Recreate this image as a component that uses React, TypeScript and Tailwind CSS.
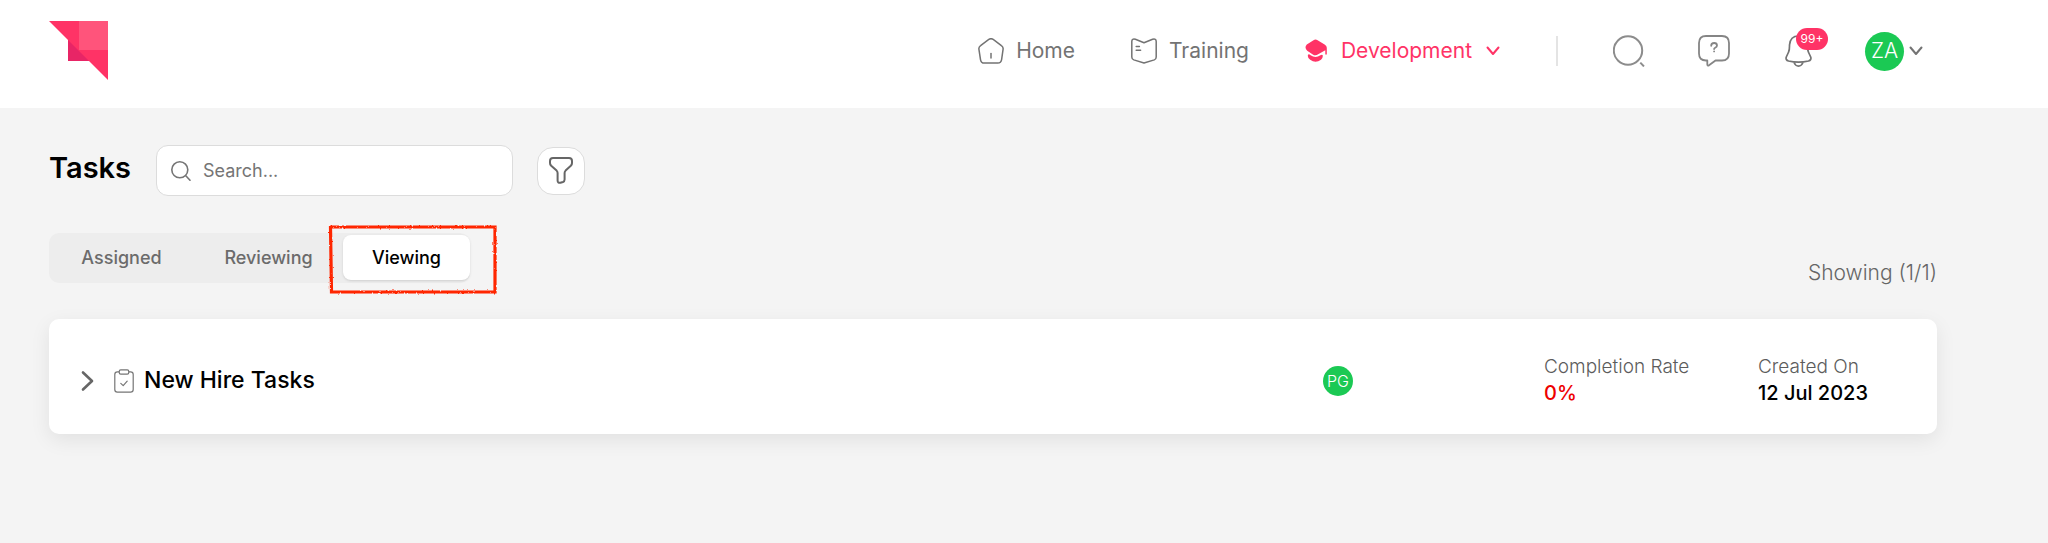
import { useState } from "react";
import clsx from "clsx";

type IconProps = { className?: string };

const tasks = [
  {
    id: 1,
    name: "New Hire Tasks",
    owner: "PG",
    completionRate: 0,
    createdOn: "12 Jul 2023",
  },
];

const tabs = ["Assigned", "Reviewing", "Viewing"];

function Logo() {
  return (
    <svg className="size-[60px]" viewBox="0 0 60 60" aria-hidden="true">
      <path d="M0 0H59V59L40 40H19V19Z" fill="#ff3366" />
      <path d="M19 19L40 40H19Z" fill="#e82566" />
      <path d="M30 0H59V29H30Z" fill="#ff547b" />
    </svg>
  );
}

function HomeIcon() {
  return (
    <svg className="size-[26px]" viewBox="0 0 26 26" fill="none" stroke="currentColor" strokeWidth="1.5" aria-hidden="true">
      <path d="M10.8 1.3Q13 .1 15.2 1.3L23.4 7.6Q25.4 9 25.1 11.2L23.6 21.6Q23 25.1 19.8 25.1H6.3Q3 25.1 2.5 21.6L.9 11.2Q.6 9 2.6 7.6Z" />
      <path d="M13 15.5V20" strokeLinecap="round" />
    </svg>
  );
}

function BookIcon() {
  return (
    <svg className="size-[26px]" viewBox="0 0 26 26" fill="none" stroke="currentColor" strokeWidth="1.5" strokeLinejoin="round" aria-hidden="true">
      <path d="M13 4.8L4.4 1.2Q.8 .2 .8 3.5V19Q.8 21.2 2.8 21.9L13 25L23.3 21.9Q25.2 21.2 25.2 19V3.5Q25.2 .2 21.6 1.2Z" />
      <path d="M5.2 8.6H8.4M5.2 12.2H9.6" strokeLinecap="round" />
    </svg>
  );
}

function CapIcon() {
  return (
    <svg className="h-[24px] w-[22px]" viewBox="0 0 22 24" fill="currentColor" aria-hidden="true">
      <path d="M8.5 1.2Q10.5 0 12.6 1.2L19.6 5.6Q22 7.4 21.8 9V15.5H20.3V11.2L13.2 15.3Q10.5 17.2 7.8 15.4L2.2 11.7Q-1 8.5 1.8 5.4Z" />
      <path d="M3 15.7Q3.8 14.7 5.6 16.2Q10.5 19.6 15.4 16.2Q17.4 14.9 17.8 16.6Q18 19 16 20.8Q10.5 24.5 5.2 20.8Q2.2 18.6 3 15.7Z" />
    </svg>
  );
}

function ChevronIcon({ className }: IconProps) {
  return (
    <svg className={className} viewBox="0 0 14 10" fill="none" stroke="currentColor" strokeWidth="2" strokeLinecap="round" strokeLinejoin="round" aria-hidden="true">
      <path d="M1.5 1.5L7 8L12.5 1.5" />
    </svg>
  );
}

function HeaderSearchIcon() {
  return (
    <svg className="size-8" viewBox="0 0 32 32" fill="none" stroke="#8c8c8c" strokeWidth="2" aria-hidden="true">
      <circle cx="15" cy="15.5" r="14.2" />
      <path d="M27.3 27.6L31 31.4" />
    </svg>
  );
}

function HelpIcon() {
  return (
    <svg className="size-8" viewBox="0 0 32 32" fill="none" stroke="#858585" strokeWidth="1.8" strokeLinecap="round" strokeLinejoin="round" aria-hidden="true">
      <path d="M8 1H24Q31 1 31 8V18.5Q31 25.500 24 25.500H17.5L11 30.3Q9.3 31 9.3 29.3V25.500H8Q1 25.500 1 18.5V8Q1 1 8 1Z" />
      <path d="M13.2 10.8Q13.2 8 16.2 8Q19 8 19 10.5Q19 12 17.2 12.8Q16.1 13.4 16.1 14" />
      <path d="M16.1 16.3V16.4" />
    </svg>
  );
}

function BellIcon() {
  return (
    <svg className="h-8 w-[29px]" viewBox="-2 0 29 32" fill="none" stroke="currentColor" strokeWidth="1.7" strokeLinejoin="round" aria-hidden="true">
      <path d="M13.5 1Q5.2 1 4.5 10Q4.6 15 3.6 17L1.3 22Q.3 25 3.5 26Q13.5 28.3 23.5 26Q26.7 25 25.7 22L23.4 17Q22.4 15 22.5 10Q21.8 1 13.5 1Z" />
      <path d="M9 27.5Q10.5 31.1 13.5 31.1Q16.5 31.1 18 27.5" />
    </svg>
  );
}

function SearchIcon({ className }: IconProps) {
  return (
    <svg className={className} viewBox="0 0 20 20" fill="none" stroke="currentColor" strokeWidth="1.6" strokeLinecap="round" aria-hidden="true">
      <circle cx="8.8" cy="8.8" r="8" />
      <path d="M14.8 14.8L19 19.2" />
    </svg>
  );
}

function FilterIcon() {
  return (
    <svg className="h-[27px] w-6" viewBox="0 0 24 27" fill="none" stroke="currentColor" strokeWidth="2" strokeLinejoin="round" aria-hidden="true">
      <path d="M4 1H20Q23 1 23 4V6Q23 7.6 21.8 8.8L16.6 13.6Q15.6 14.6 15.6 16V22.6Q15.6 24.4 14 25L11.4 25.8Q8.6 26.2 8.6 23.5V16Q8.6 14.6 7.6 13.6L2.2 8.8Q1 7.6 1 6V4Q1 1 4 1Z" />
    </svg>
  );
}

function ClipboardIcon() {
  return (
    <svg className="h-6 w-5" viewBox="0 0 20 24" fill="none" stroke="currentColor" strokeWidth="1.2" strokeLinecap="round" strokeLinejoin="round" aria-hidden="true">
      <path d="M5.2 2.8H3.4Q.8 2.8 .8 5.4V20.6Q.8 23.2 3.4 23.2H16.6Q19.2 23.2 19.2 20.6V5.4Q19.2 2.8 16.6 2.8H14.8" />
      <rect x="5.2" y=".8" width="9.6" height="4.4" rx="1.6" />
      <path d="M6.8 14.4L9.2 16.6L13.2 12.2" />
    </svg>
  );
}

function MarkerFrame() {
  return (
    <svg className="pointer-events-none absolute -top-2 right-[-28px] h-[70px] w-[170px]" viewBox="0 0 170 70" fill="none" aria-hidden="true">
      <filter id="marker" x="-5%" y="-5%" width="110%" height="110%">
        <feTurbulence type="fractalNoise" baseFrequency="0.5" numOctaves="2" seed="4" />
        <feDisplacementMap in="SourceGraphic" scale="2.5" />
      </filter>
      <path d="M2.5 2H167V67H3.5Z" stroke="#ff2600" strokeWidth="3.2" filter="url(#marker)" />
    </svg>
  );
}

function Avatar({ initials, className }: { initials: string; className: string }) {
  return (
    <span className={clsx("flex items-center justify-center rounded-full bg-[#1bc954] font-light text-white", className)}>
      {initials}
    </span>
  );
}

function Header() {
  return (
    <header className="flex h-[108px] items-start justify-between bg-white pl-[49px] pr-[125px] text-[#737373]">
      <a href="#" aria-label="Dashboard" className="mt-[21px]">
        <Logo />
      </a>
      <div className="flex h-[102px] items-center">
        <nav className="flex items-center gap-14 text-[21px]">
          <a href="#" className="flex items-center gap-3">
            <HomeIcon />
            Home
          </a>
          <a href="#" className="flex items-center gap-3">
            <BookIcon />
            Training
          </a>
          <a href="#" className="flex items-center gap-3.5 text-[#ff3366]">
            <CapIcon />
            Development
            <ChevronIcon className="h-[10px] w-[14px]" />
          </a>
        </nav>
        <div className="ml-14 h-[30px] w-0.5 bg-[#e4e4e4]" />
        <div className="ml-[55px] flex items-center gap-[53px]">
          <button type="button" aria-label="Search">
            <HeaderSearchIcon />
          </button>
          <button type="button" aria-label="Help">
            <HelpIcon />
          </button>
          <button type="button" aria-label="Notifications" className="relative">
            <BellIcon />
            <span className="absolute -top-[7px] left-[13px] flex h-[22px] w-8 items-center justify-center rounded-full bg-[#ff3366] text-xs text-white">
              99+
            </span>
          </button>
          <button type="button" aria-label="Account" className="flex items-center gap-[5px]">
            <Avatar initials="ZA" className="size-[39px] text-[21px]" />
            <ChevronIcon className="h-[10px] w-[14px]" />
          </button>
        </div>
      </div>
    </header>
  );
}

export default function App() {
  const [activeTab, setActiveTab] = useState("Viewing");

  return (
    <div className="min-h-screen bg-[#f4f4f4] font-['Inter',sans-serif] text-black">
      <Header />
      <main className="pl-[49px] pr-[111px] pt-[37px]">
        <div className="flex items-center">
          <h1 className="w-[107px] pb-1.5 text-[29px] font-semibold">Tasks</h1>
          <label className="flex h-[51px] w-[357px] items-center gap-3 rounded-xl border border-[#dcdcdc] bg-white pl-[14px] text-[#757575]">
            <SearchIcon className="size-5" />
            <input
              type="text"
              aria-label="Search"
              placeholder="Search..."
              className="min-w-0 flex-1 text-lg outline-none placeholder:text-[#757575]"
            />
          </label>
          <button
            type="button"
            aria-label="Filter"
            className="ml-6 flex size-12 items-center justify-center rounded-2xl border border-[#dcdcdc] bg-white text-[#666666]"
          >
            <FilterIcon />
          </button>
        </div>

        <div className="mt-[37px] flex items-start justify-between">
          <div className="relative flex h-[50px] items-start rounded-[10px] bg-[#ededed] pt-0.5 text-lg font-medium">
            {tabs.map((tab) => (
              <button
                key={tab}
                type="button"
                onClick={() => setActiveTab(tab)}
                className={clsx(
                  "h-[45px] rounded-lg",
                  tab === "Assigned" && "w-[145px]",
                  tab === "Reviewing" && "w-[149px]",
                  tab === "Viewing" && "w-[127px]",
                  activeTab === tab ? "bg-white shadow-sm" : "text-[#6b6b6b]",
                )}
              >
                {tab}
              </button>
            ))}
            <MarkerFrame />
          </div>
          <p className="pt-[26px] text-[21px] leading-7 font-light text-[#666666]">Showing (1/1)</p>
        </div>

        <ul className="mt-8">
          {tasks.map((task) => (
            <li
              key={task.id}
              className="flex h-[115px] items-center rounded-[10px] bg-white pt-2 pl-[31px] shadow-[0_6px_20px_rgba(0,0,0,0.08)]"
            >
              <button type="button" aria-label="Expand" className="w-[14px] text-[#666666]">
                <svg className="h-[22px] w-[14px]" viewBox="0 0 14 22" fill="none" stroke="currentColor" strokeWidth="2.6" strokeLinecap="round" strokeLinejoin="round">
                  <path d="M3 2.5L12 11L3 19.5" />
                </svg>
              </button>
              <span className="ml-5 text-[#757575]">
                <ClipboardIcon />
              </span>
              <h2 className="ml-[10px] flex-1 text-[23px] font-medium">{task.name}</h2>
              <Avatar initials={task.owner} className="size-[30px] text-base" />
              <div className="ml-[191px] w-[214px] pb-0.5">
                <p className="text-[19px] leading-[27px] font-light text-[#5c5c5c]">Completion Rate</p>
                <p className="text-xl leading-[27px] font-medium text-[#ee0000]">{task.completionRate}%</p>
              </div>
              <div className="w-[179px] pb-0.5">
                <p className="text-[19px] leading-[27px] font-light text-[#5c5c5c]">Created On</p>
                <p className="text-xl leading-[27px] font-medium">{task.createdOn}</p>
              </div>
            </li>
          ))}
        </ul>
      </main>
    </div>
  );
}
